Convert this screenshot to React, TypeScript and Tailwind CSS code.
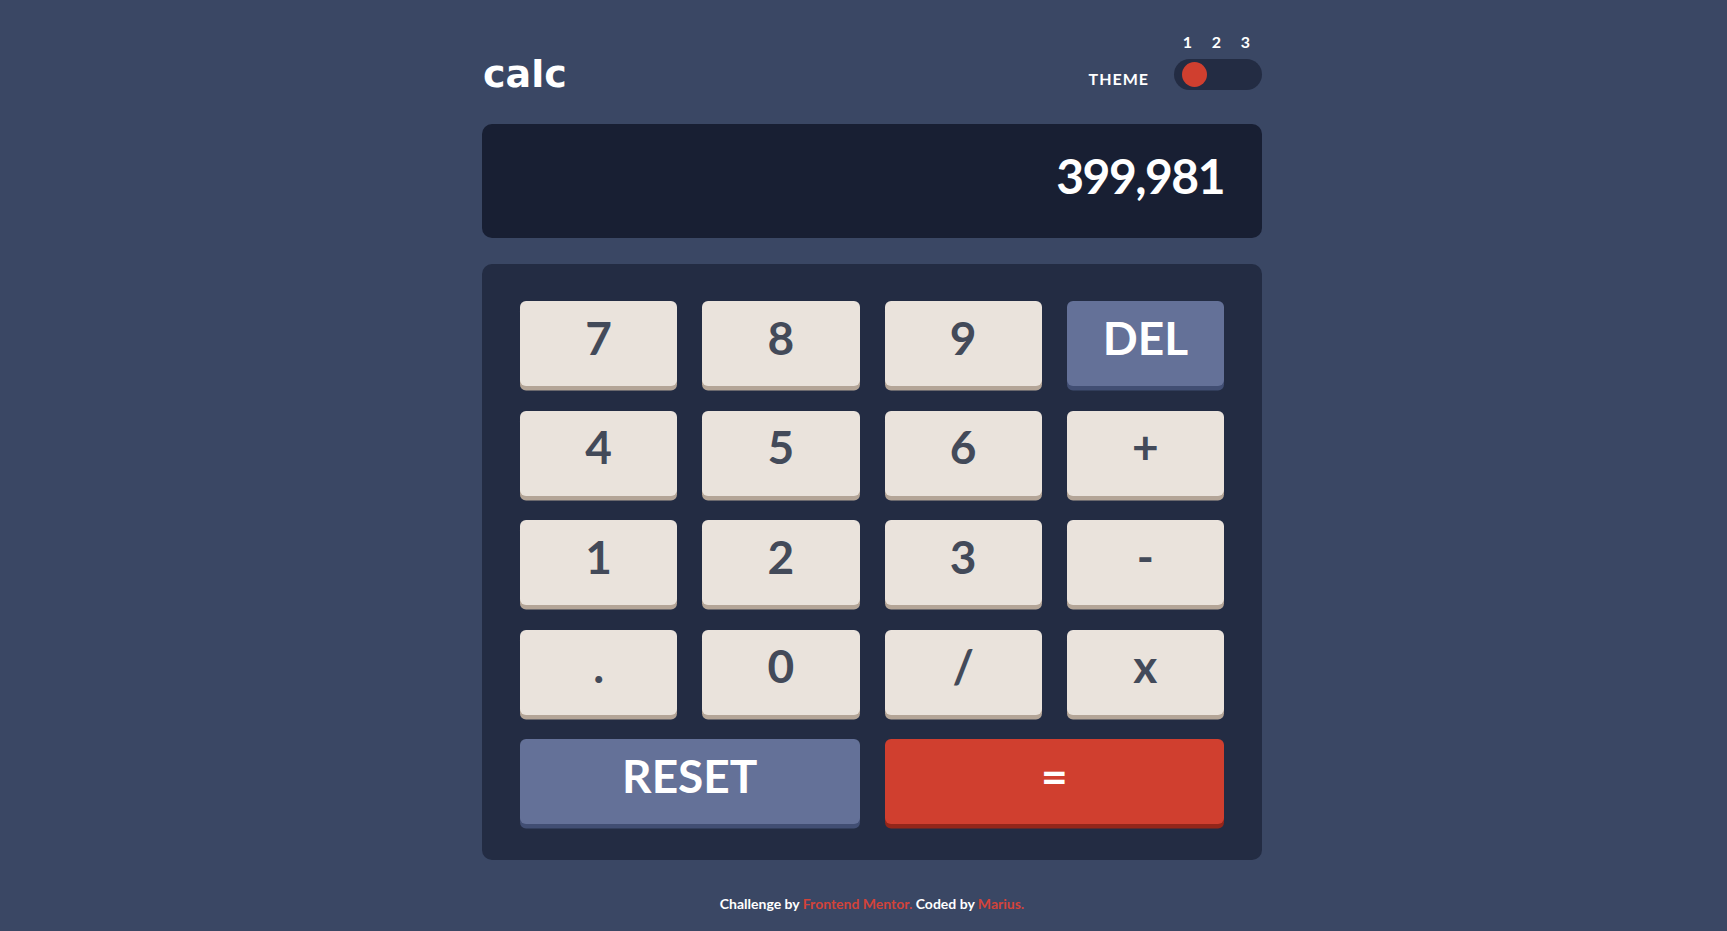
const keys: { label: string; kind: "num" | "del" | "reset" | "equal" }[] = [
  { label: "7", kind: "num" },
  { label: "8", kind: "num" },
  { label: "9", kind: "num" },
  { label: "DEL", kind: "del" },
  { label: "4", kind: "num" },
  { label: "5", kind: "num" },
  { label: "6", kind: "num" },
  { label: "+", kind: "num" },
  { label: "1", kind: "num" },
  { label: "2", kind: "num" },
  { label: "3", kind: "num" },
  { label: "-", kind: "num" },
  { label: ".", kind: "num" },
  { label: "0", kind: "num" },
  { label: "/", kind: "num" },
  { label: "x", kind: "num" },
  { label: "RESET", kind: "reset" },
  { label: "=", kind: "equal" },
];

const keyStyles = {
  num: "bg-[#eae3dc] text-[#434a59] shadow-[0_4.5px_0_#b4a597]",
  del: "bg-[#647198] text-white shadow-[0_4.5px_0_#414e73]",
  reset: "col-span-2 bg-[#647198] text-white shadow-[0_4.5px_0_#414e73]",
  equal: "col-span-2 bg-[#d03f2f] text-white shadow-[0_4.5px_0_#93261a]",
};

const App = () => {
  return (
    <div className="min-h-screen bg-[#3a4764] flex flex-col items-center pl-[17px] font-['Lato',sans-serif] font-bold">
      <div className="w-[780px] pt-[34px]">
        {/* Header */}
        <header className="flex items-end justify-between">
          <h1 className="font-['DejaVu_Sans',sans-serif] text-[38px] leading-none font-bold text-white mb-[-3px] pl-px">
            calc
          </h1>
          <div className="flex items-end gap-[25px]">
            <span className="text-[16px] leading-none text-white tracking-[1px] mb-[3px]">THEME</span>
            <div className="flex flex-col">
              <div className="flex mb-[9px] -ml-[1px] text-[16px] leading-none text-white">
                <span className="w-[29px] text-center">1</span>
                <span className="w-[29px] text-center">2</span>
                <span className="w-[29px] text-center">3</span>
              </div>
              <div className="w-[88px] h-[31px] rounded-full bg-[#232c43] flex items-center pl-[8px]">
                <div className="w-[25px] h-[25px] rounded-full bg-[#d03f2f]" />
              </div>
            </div>
          </div>
        </header>

        {/* Screen */}
        <div className="mt-[34px] h-[114px] rounded-[10px] bg-[#181f33] flex items-center justify-end pr-[38px] pb-[11px]">
          <span className="text-[48px] leading-none text-white tracking-[-1.5px]">399,981</span>
        </div>

        {/* Keypad */}
        <div className="mt-[26px] rounded-[10px] bg-[#232c43] px-[38px] pt-[37px] pb-[36px]">
          <div className="grid grid-cols-4 gap-x-[25px] gap-y-[24.5px]">
            {keys.map((k) => (
              <button
                key={k.label}
                className={`h-[85px] rounded-[6px] flex items-center justify-center pb-[12px] text-[46px] leading-none ${keyStyles[k.kind]}`}
              >
                {k.label}
              </button>
            ))}
          </div>
        </div>
      </div>

      <footer className="mt-[37px] text-[14px] leading-none text-white">
        Challenge by <span className="text-[#d2433a]">Frontend Mentor.</span> Coded by{" "}
        <span className="text-[#d2433a]">Marius.</span>
      </footer>
    </div>
  );
};

export default App;
